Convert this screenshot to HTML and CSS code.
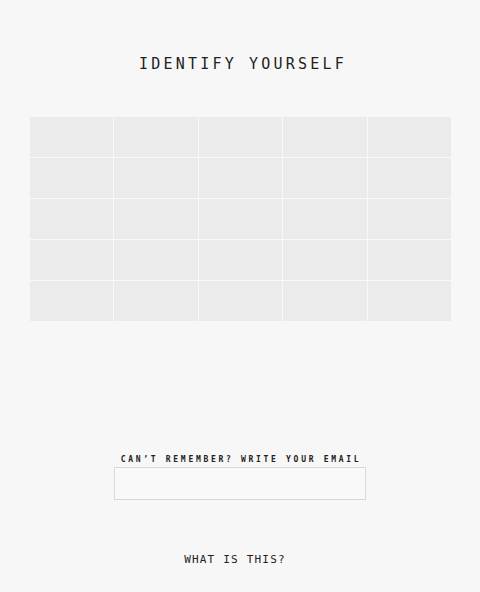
FILE: index.html
```html
<!DOCTYPE html>
<html>
<head>
<meta charset="utf-8">
<link rel="stylesheet" href="styles.css">
</head>
<body>
<main class="page">
  <h1 class="title">IDENTIFY YOURSELF</h1>
  <div class="grid">
    <div class="cell"></div><div class="cell"></div><div class="cell"></div><div class="cell"></div><div class="cell"></div>
    <div class="cell"></div><div class="cell"></div><div class="cell"></div><div class="cell"></div><div class="cell"></div>
    <div class="cell"></div><div class="cell"></div><div class="cell"></div><div class="cell"></div><div class="cell"></div>
    <div class="cell"></div><div class="cell"></div><div class="cell"></div><div class="cell"></div><div class="cell"></div>
    <div class="cell"></div><div class="cell"></div><div class="cell"></div><div class="cell"></div><div class="cell"></div>
  </div>
  <div class="email">
    <label class="email-label">can’t remember? write your email</label>
    <input class="email-input" type="text">
  </div>
  <a class="what">WHAT IS THIS?</a>
</main>
</body>
</html>
```
FILE: styles.css
```css
html, body {
  margin: 0;
  padding: 0;
  background: #f7f7f7;
}
.page {
  width: 480px;
  height: 592px;
  display: flex;
  flex-direction: column;
  align-items: center;
  font-family: "DejaVu Sans Mono", "Liberation Mono", monospace;
  color: #222;
}
.title {
  margin: 54px 0 0 6px;
  font-size: 15px;
  font-weight: normal;
  letter-spacing: 3.2px;
  line-height: 20px;
}
.grid {
  margin-top: 43px;
  display: grid;
  grid-template-columns: 83px 84px 83px 84px 83px;
  grid-auto-rows: 40px;
  gap: 1px;
  background: #f9f9f9;
}
.cell {
  background: #ebebeb;
}
.email {
  margin-top: 134px;
  display: flex;
  flex-direction: column;
  align-items: center;
  gap: 2px;
}
.email-label {
  font-size: 8px;
  font-weight: bold;
  text-transform: uppercase;
  letter-spacing: 2.7px;
  line-height: 10px;
  margin-left: 2px;
}
.email-input {
  box-sizing: border-box;
  width: 252px;
  height: 33px;
  margin: 0;
  border: 1px solid #d9d9d9;
  background: #f9f9f9;
  outline: none;
}
.what {
  margin: 53px 10px 0 0;
  font-size: 11px;
  letter-spacing: 1.2px;
  line-height: 14px;
  color: #222;
}
```
